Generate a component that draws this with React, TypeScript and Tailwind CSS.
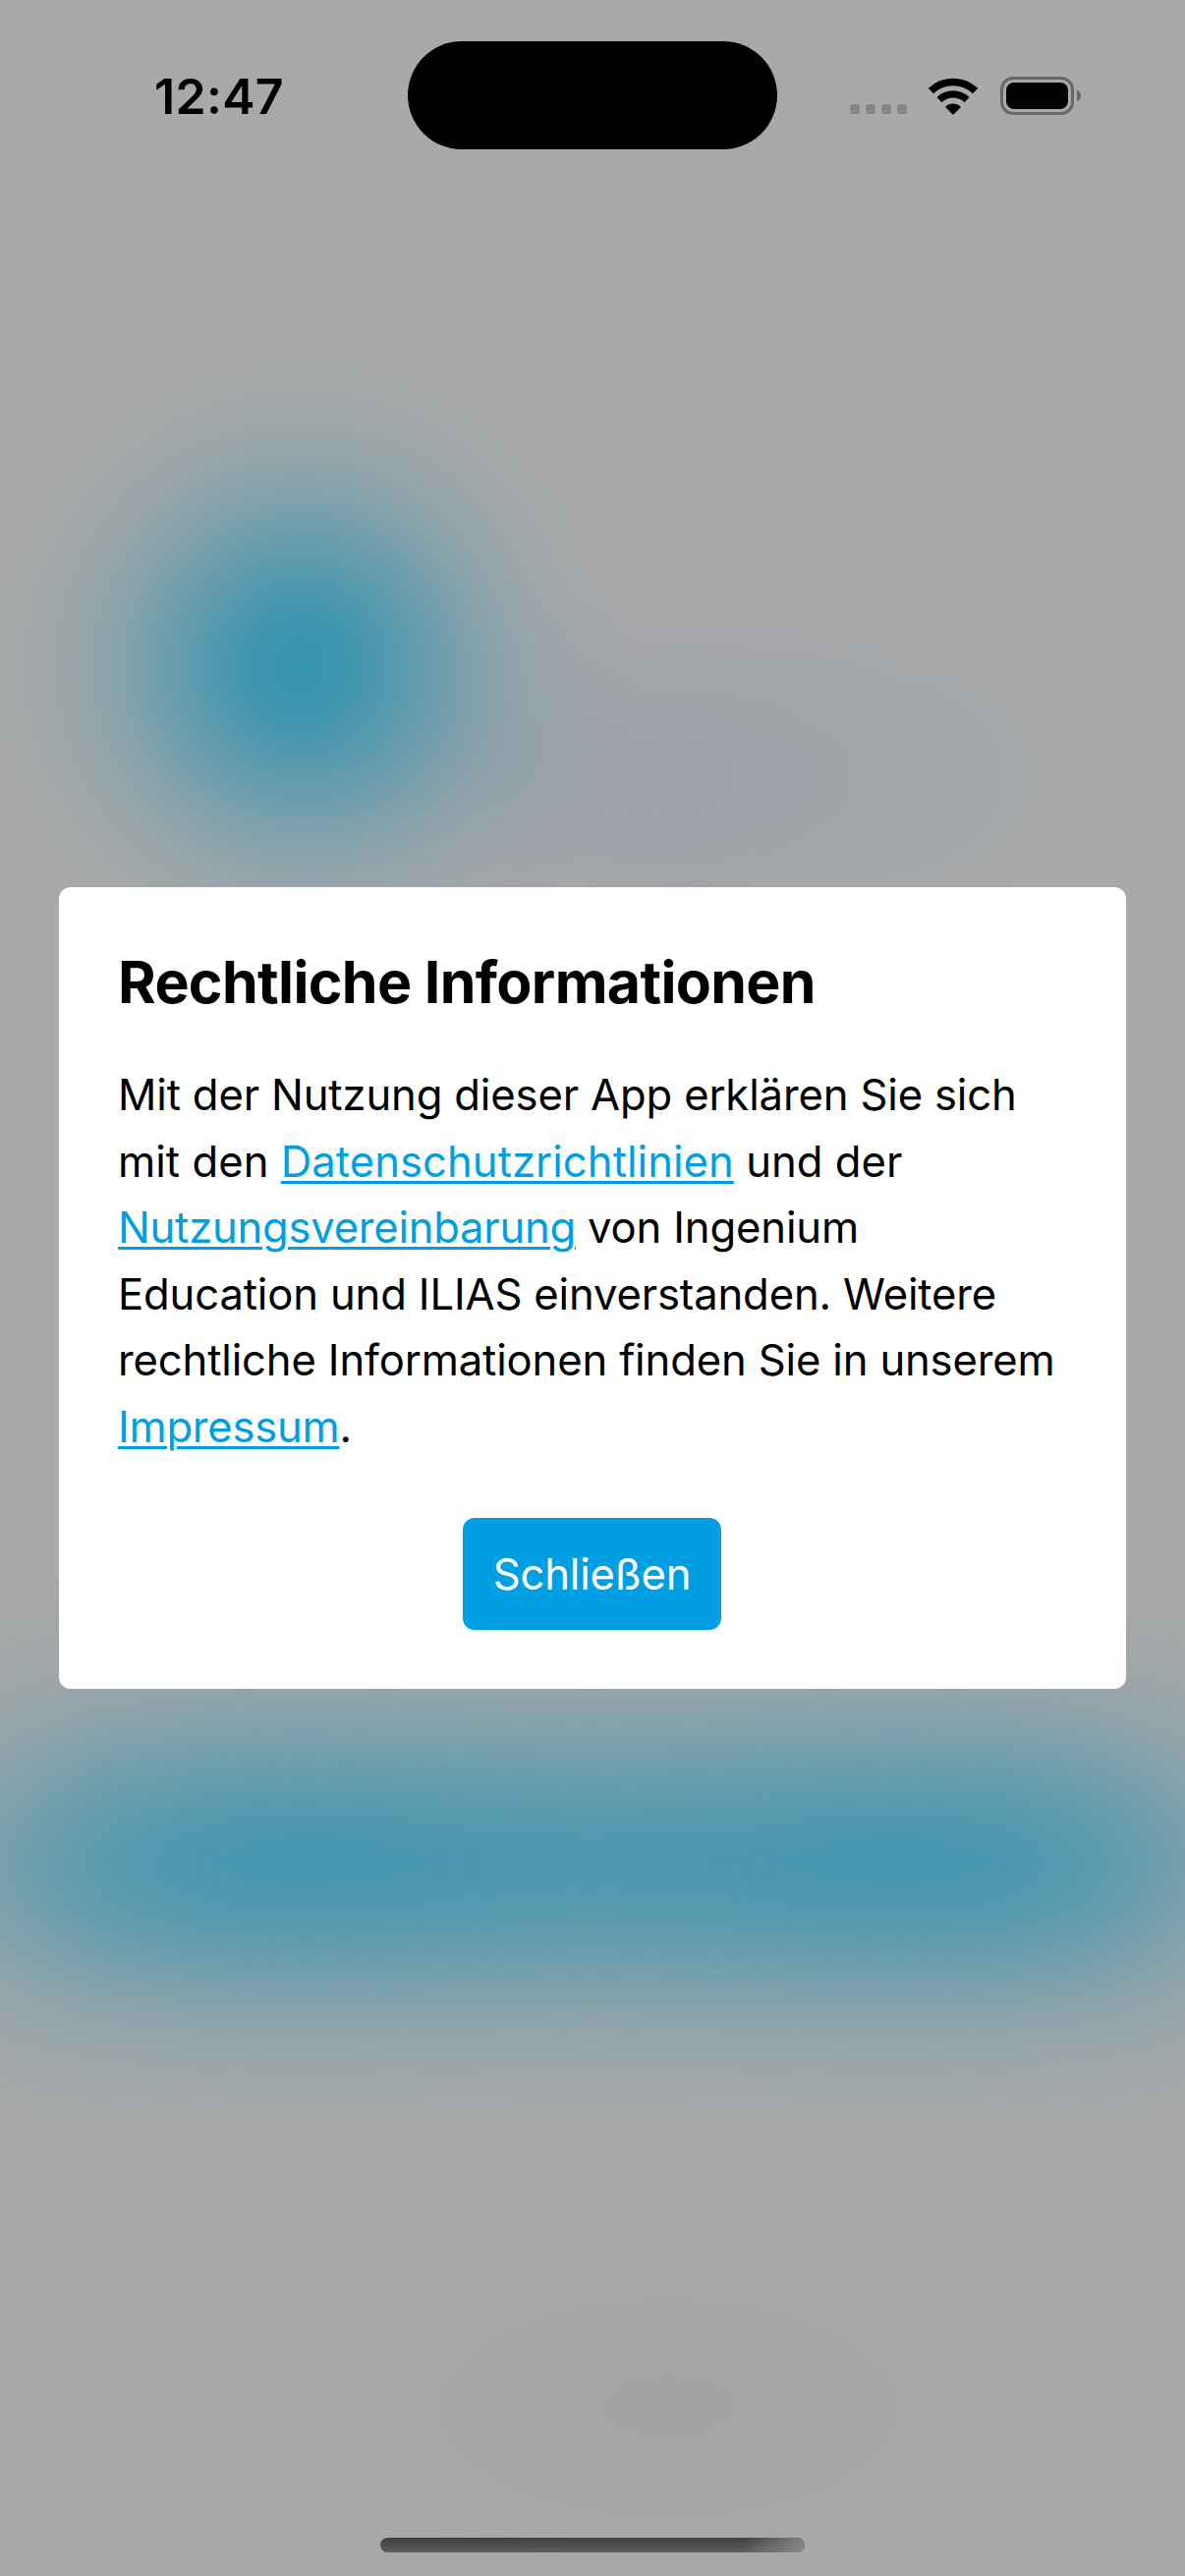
function BlurredBackdrop() {
  return (
    <div className="absolute inset-0 overflow-hidden bg-[#a9a9a9]">
      {/* heading glow, right of the logo */}
      <div className="absolute left-[250px] top-[570px] h-[440px] w-[800px] bg-[radial-gradient(closest-side,rgba(148,156,170,0.6)_0%,rgba(148,156,170,0.53)_20%,rgba(148,156,170,0.36)_40%,rgba(148,156,170,0.19)_60%,rgba(148,156,170,0.06)_80%,rgba(148,156,170,0)_100%)]" />
      <div className="absolute left-[600px] top-[570px] h-[440px] w-[600px] bg-[radial-gradient(closest-side,rgba(150,164,170,0.35)_0%,rgba(150,164,170,0.31)_20%,rgba(150,164,170,0.21)_40%,rgba(150,164,170,0.11)_60%,rgba(150,164,170,0.03)_80%,rgba(150,164,170,0)_100%)]" />
      {/* logo glow */}
      <div className="absolute left-[-45px] top-[328px] h-[700px] w-[700px] bg-[radial-gradient(closest-side,rgba(52,147,176,1)_0%,rgba(52,147,176,0.89)_16%,rgba(52,147,176,0.62)_33%,rgba(52,147,176,0.33)_50%,rgba(52,147,176,0.125)_66.6%,rgba(52,147,176,0.035)_83%,rgba(52,147,176,0)_100%)]" />
      {/* login button glow */}
      <div className="absolute inset-x-0 top-[1597px] h-[600px] bg-[linear-gradient(to_bottom,rgba(66,150,176,0)_0%,rgba(66,150,176,0.044)_8.3%,rgba(66,150,176,0.135)_16.6%,rgba(66,150,176,0.325)_25%,rgba(66,150,176,0.6)_33.3%,rgba(66,150,176,0.86)_42%,rgba(66,150,176,0.94)_47%,rgba(66,150,176,0.96)_50%,rgba(66,150,176,0.94)_53%,rgba(66,150,176,0.86)_58%,rgba(66,150,176,0.6)_66.6%,rgba(66,150,176,0.325)_75%,rgba(66,150,176,0.135)_83.3%,rgba(66,150,176,0.044)_91.6%,rgba(66,150,176,0)_100%)] [mask-image:linear-gradient(to_right,rgba(0,0,0,0.48)_0px,rgba(0,0,0,0.64)_50px,rgba(0,0,0,0.82)_110px,rgba(0,0,0,0.95)_200px,rgba(0,0,0,0.99)_260px,rgba(0,0,0,1)_310px,rgba(0,0,0,0.99)_370px,rgba(0,0,0,0.96)_450px,rgba(0,0,0,0.92)_600px,rgba(0,0,0,0.95)_750px,rgba(0,0,0,0.99)_860px,rgba(0,0,0,1)_920px,rgba(0,0,0,0.96)_1020px,rgba(0,0,0,0.82)_1105px,rgba(0,0,0,0.66)_1160px,rgba(0,0,0,0.5)_1206px)]" />
      {/* footer shade */}
      <div className="absolute left-[280px] top-[2260px] h-[380px] w-[800px] bg-[radial-gradient(closest-side,rgba(155,155,155,0.4)_0%,rgba(155,155,155,0.26)_40%,rgba(155,155,155,0.1)_70%,rgba(155,155,155,0)_100%)]" />
    </div>
  );
}

function WifiIcon() {
  return (
    <svg className="h-[38px] w-[52px]" viewBox="0 0 52 38" fill="none">
      <path d="M3.4 13.6A32.5 32.5 0 0 1 48.6 13.6" stroke="#000" strokeWidth="7.6" />
      <path d="M11.9 22.6A20.3 20.3 0 0 1 40.1 22.6" stroke="#000" strokeWidth="7.4" />
      <path d="M18.6 29.2C22.7 25.6 29.3 25.6 33.4 29.2Q33.9 29.8 33.4 30.4L26.8 37.3Q26 38 25.2 37.3L18.6 30.4Q18.1 29.8 18.6 29.2Z" fill="#000" />
    </svg>
  );
}

function BatteryIcon() {
  return (
    <svg className="h-[39px] w-[83px]" viewBox="0 0 83 39" fill="none">
      <rect x="1.5" y="1.5" width="72" height="36" rx="11.5" stroke="#686868" strokeWidth="3" />
      <rect x="6" y="6" width="63" height="27" rx="8" fill="#000" />
      <path d="M78 13.5C83.3 15.5 83.3 23.5 78 25.5Z" fill="#686868" />
    </svg>
  );
}

function StatusBar() {
  return (
    <header className="absolute inset-x-0 top-0 flex items-center pt-[41.5px]">
      <div className="w-[415px] pt-[2px] pl-[157px] text-[50px] leading-[109px] font-semibold tracking-[0.3px]">12:47</div>
      <div className="h-[110.5px] w-[376px] rounded-[55px] bg-black" />
      <div className="flex flex-1 items-center pt-px pl-[74px]">
        <div className="mt-[27px] flex gap-[6px]">
          {[0, 1, 2, 3].map((dot) => (
            <span key={dot} className="size-[10px] rounded-[3px] bg-[#868686]" />
          ))}
        </div>
        <div className="ml-[21px]">
          <WifiIcon />
        </div>
        <div className="ml-[22px]">
          <BatteryIcon />
        </div>
      </div>
    </header>
  );
}

const link = "text-[#009fe3] underline decoration-[3px] underline-offset-[4px]";

export default function App() {
  return (
    <div className="relative h-[2622px] w-[1206px] overflow-hidden font-[Inter,'Liberation_Sans',sans-serif] text-black">
      <BlurredBackdrop />
      <main className="relative flex h-full items-center px-[60px]">
        <section className="flex w-full flex-col items-center rounded-[12px] bg-white p-[60px]">
          <h1 className="w-full pt-px text-[59px] leading-[72px] font-bold tracking-[-0.65px]">Rechtliche Informationen</h1>
          <p className="mt-[45px] w-full text-[43.6px] leading-[67.5px] tracking-[-0.15px] whitespace-nowrap">
            Mit der Nutzung dieser App erklären Sie sich
            <br />
            <span className="tracking-[0.05px]">
              mit den <a className={link}>Datenschutzrichtlinien</a> und der
            </span>
            <br />
            <a className={`${link} tracking-[-0.25px]`}>Nutzungsvereinbarung</a> von Ingenium
            <br />
            Education und ILIAS einverstanden. Weitere
            <br />
            rechtliche Informationen finden Sie in unserem
            <br />
            <a className={`${link} tracking-[-0.25px]`}>Impressum</a>.
          </p>
          <button className="mt-[59px] mr-px h-[114px] w-[263px] rounded-[12px] bg-[#009fe3] pt-px text-[43.6px] tracking-[-0.2px] text-white">
            Schließen
          </button>
        </section>
      </main>
      <StatusBar />
      <div className="absolute bottom-[24px] left-[387px] h-[15px] w-[432px] overflow-hidden rounded-full bg-linear-to-b from-[#404040] to-[#5e5e5e]">
        <div className="ml-auto h-full w-[70px] bg-[linear-gradient(100deg,rgba(140,140,140,0)_10%,rgba(140,140,140,0.9)_100%)]" />
      </div>
    </div>
  );
}
